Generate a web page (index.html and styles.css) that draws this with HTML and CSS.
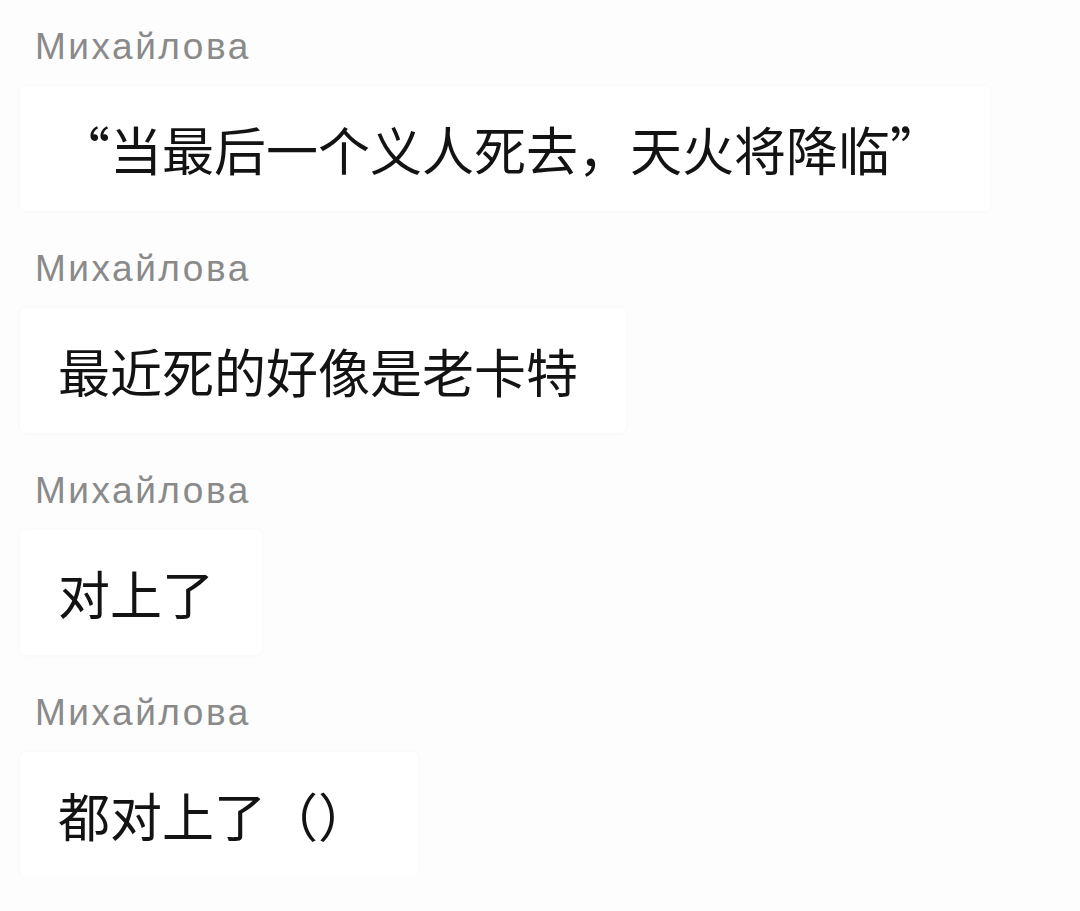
FILE: index.html
```html
<!DOCTYPE html>
<html lang="zh">
<head>
<meta charset="utf-8">
<link rel="stylesheet" href="styles.css">
</head>
<body>
<div class="chat">
  <div class="msg">
    <div class="name">Михайлова</div>
    <div class="bubble">“当最后一个义人死去，天火将降临”</div>
  </div>
  <div class="msg">
    <div class="name">Михайлова</div>
    <div class="bubble">最近死的好像是老卡特</div>
  </div>
  <div class="msg">
    <div class="name">Михайлова</div>
    <div class="bubble">对上了</div>
  </div>
  <div class="msg">
    <div class="name">Михайлова</div>
    <div class="bubble">都对上了（）</div>
  </div>
</div>
</body>
</html>
```

FILE: styles.css
```css
html, body {
  margin: 0;
  padding: 0;
  background: #fdfdfd;
}
.chat {
  display: flex;
  flex-direction: column;
  gap: 38px;
  padding-top: 27px;
}
.msg {
  display: flex;
  flex-direction: column;
  align-items: flex-start;
  gap: 19px;
}
.name {
  padding-left: 35px;
  font-family: "Liberation Sans", Arial, sans-serif;
  font-size: 37px;
  line-height: 40px;
  letter-spacing: 2.5px;
  color: #8a8a8a;
}
.bubble {
  margin-left: 20px;
  padding: 36px 48px 36px 38px;
  background: #ffffff;
  box-shadow: 0 0 4px rgba(0, 0, 0, 0.035);
  border-radius: 6px;
  font-family: "Noto Sans CJK SC", sans-serif;
  font-size: 52px;
  line-height: 53px;
  color: #131313;
}
```
